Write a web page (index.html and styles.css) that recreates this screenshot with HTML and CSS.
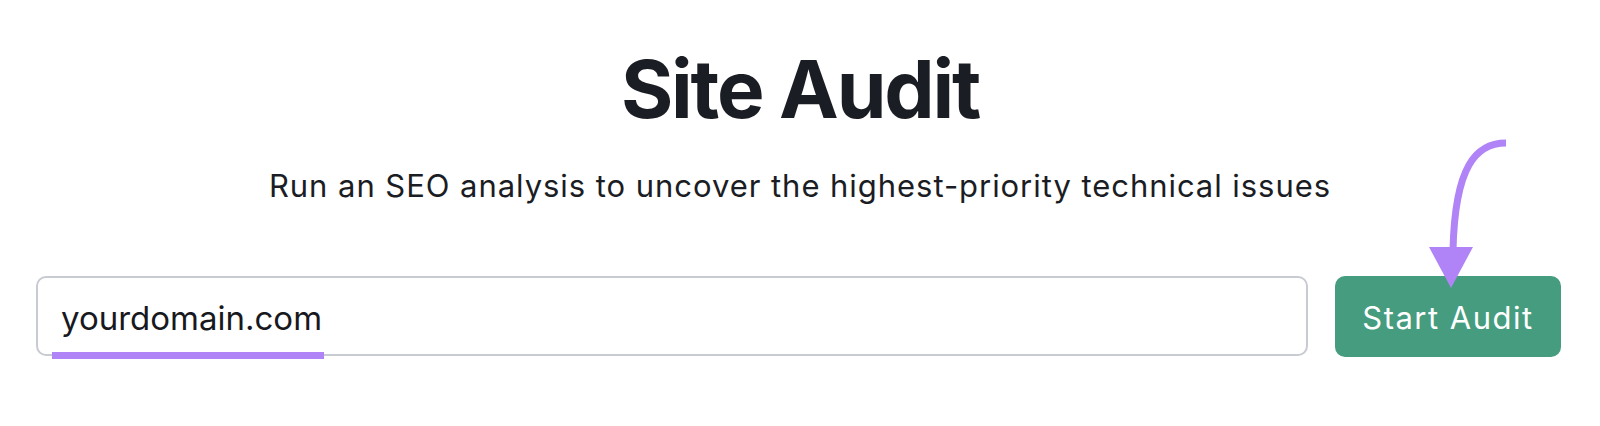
FILE: index.html
```html
<!DOCTYPE html>
<html lang="en">
<head>
<meta charset="utf-8">
<title>Site Audit</title>
<link rel="stylesheet" href="styles.css">
</head>
<body>
<main class="page">
  <h1 class="title">Site Audit</h1>
  <p class="subtitle">Run an SEO analysis to uncover the highest-priority technical issues</p>
  <div class="form-row">
    <div class="field">
      <span class="field-text">yourdomain.com</span>
      <span class="underline"></span>
    </div>
    <button class="btn">Start Audit</button>
  </div>
  <svg class="arrow" width="1600" height="426" viewBox="0 0 1600 426" aria-hidden="true">
    <path d="M1506 143 C1476 143 1455 166 1453 250" fill="none" stroke="#b084f6" stroke-width="7" stroke-linecap="butt"/>
    <polygon points="1429,247 1473,247 1451,288" fill="#b084f6"/>
  </svg>
</main>
</body>
</html>
```
FILE: styles.css
```css
* { box-sizing: border-box; }
html, body { margin: 0; padding: 0; background: #ffffff; }
body { width: 1600px; height: 426px; overflow: hidden; font-family: Inter, "Noto Sans", sans-serif; color: #1b1d24; }
.page { position: relative; width: 1600px; height: 426px; display: flex; flex-direction: column; align-items: center; }
.title { margin: 49px 0 0; font-size: 80px; line-height: 80px; font-weight: 700; letter-spacing: -2.2px; color: #1b1d24; }
.subtitle { margin: 42px 0 0; font-size: 31px; line-height: 30px; font-weight: 400; letter-spacing: 0.95px; color: #1b1d24; }
.form-row { align-self: stretch; display: flex; gap: 27px; margin-top: 75px; padding: 0 39px 0 36px; }
.field { position: relative; flex: 1; height: 80px; border: 2px solid #c9cbd2; border-radius: 10px; display: flex; align-items: center; padding: 3px 0 0 23px; }
.field-text { font-size: 33px; color: #18191e; }
.underline { position: absolute; left: 14px; top: 74px; width: 272px; height: 7px; background: #b084f6; }
.btn { width: 226px; height: 81px; border: none; border-radius: 10px; background: #469c7f; color: #ffffff; font-family: Inter, "Noto Sans", sans-serif; font-size: 31px; letter-spacing: 1.5px; padding: 2px 0 0; }
.arrow { position: absolute; left: 0; top: 0; pointer-events: none; }
```
